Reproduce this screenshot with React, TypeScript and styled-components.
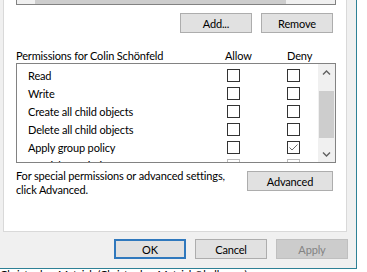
import React from 'react';
import styled, { createGlobalStyle } from 'styled-components';

const GlobalStyle = createGlobalStyle`
  html, body {
    margin: 0;
    padding: 0;
    background: #ffffff;
    overflow: hidden;
  }
  body {
    font-family: Lato, "Liberation Sans", sans-serif;
    font-size: 11px;
    letter-spacing: -0.15px;
    color: #000000;
  }
`;

const Window = styled.div`
  width: 357px;
  height: 269px;
  box-sizing: border-box;
  background: #f0f0f0;
  border-right: 1px solid #2e8196;
  border-bottom: 1px solid #2e8196;
  display: flex;
  flex-direction: column;
`;

const TabPage = styled.div`
  margin-left: 3px;
  width: 344px;
  height: 232px;
  box-sizing: border-box;
  background: #ffffff;
  border: 1px solid #d9d9d9;
  border-top: none;
  padding-left: 12px;
  display: flex;
  flex-direction: column;
`;

const UserList = styled.div`
  width: 320px;
  height: 5px;
  box-sizing: border-box;
  border: 1px solid #828282;
  border-top: none;
  background: #f0f0f0;
  padding-left: 18px;
`;

const HThumb = styled.div`
  width: 251px;
  height: 4px;
  background: #cdcdcd;
`;

const ButtonRow = styled.div`
  width: 317px;
  margin-top: 8px;
  display: flex;
  justify-content: flex-end;
  gap: 9px;
`;

const Button = styled.button<{ $w?: number; $default?: boolean }>`
  width: ${({ $w }) => $w ?? 72}px;
  height: 20px;
  box-sizing: border-box;
  padding: 0;
  font-family: inherit;
  font-size: 11px;
  letter-spacing: -0.15px;
  color: #000000;
  background: #e1e1e1;
  border: ${({ $default }) => ($default ? '2px solid #2f78bd' : '1px solid #adadad')};
  &:disabled {
    background: #cccccc;
    border-color: #bfbfbf;
    color: #838383;
  }
`;

const Header = styled.div`
  width: 320px;
  margin-top: 15px;
  height: 15px;
  display: flex;
  align-items: center;
`;

const HeaderCell = styled.span<{ $w?: number }>`
  width: ${({ $w }) => ($w ? `${$w}px` : 'auto')};
  white-space: nowrap;
`;

const PermList = styled.div`
  width: 320px;
  height: 100px;
  box-sizing: border-box;
  border: 1px solid #828282;
  display: flex;
`;

const Rows = styled.div`
  flex: 1;
  padding-top: 2px;
  overflow: hidden;
`;

const Row = styled.div`
  height: 18px;
  display: grid;
  grid-template-columns: 210px 60px 13px;
  align-items: center;
`;

const RowName = styled.span`
  padding-left: 11px;
  white-space: nowrap;
`;

const Box = styled.span<{ $faded?: boolean }>`
  width: 13px;
  height: 13px;
  box-sizing: border-box;
  border: 1px solid ${({ $faded }) => ($faded ? '#bcbcbc' : '#333333')};
  background: #ffffff;
  display: flex;
  align-items: center;
  justify-content: center;
`;

const ScrollBar = styled.div`
  width: 17px;
  background: #f0f0f0;
  display: flex;
  flex-direction: column;
`;

const Arrow = styled.div`
  height: 17px;
  display: flex;
  align-items: center;
  justify-content: center;
`;

const Track = styled.div`
  flex: 1;
  padding-top: 10px;
`;

const VThumb = styled.div`
  height: 47px;
  margin: 0 1px;
  background: #cdcdcd;
`;

const AdvancedRow = styled.div`
  width: 317px;
  margin-top: 6px;
  display: flex;
  justify-content: space-between;
  align-items: flex-start;
`;

const Note = styled.p`
  margin: 0;
  line-height: 14px;
`;

const AdvancedButton = styled(Button)`
  margin-top: 2px;
`;

const Footer = styled.div`
  margin-top: 7px;
  padding-right: 8px;
  display: flex;
  justify-content: flex-end;
  gap: 9px;
`;

const StatusLine = styled.div`
  height: 3px;
  line-height: 12px;
  white-space: nowrap;
  overflow: visible;
`;

const Check = ({ checked, faded }: { checked?: boolean; faded?: boolean }) => (
  <Box $faded={faded}>
    {checked && (
      <svg width="11" height="11" viewBox="0 0 11 11">
        <path d="M1.5 5.5 L4 8 L9.5 2.5" fill="none" stroke="#6d6d6d" strokeWidth="1" />
      </svg>
    )}
  </Box>
);

const Chevron = ({ down }: { down?: boolean }) => (
  <svg width="9" height="6" viewBox="0 0 9 6">
    <path
      d={down ? 'M1 1.5 L4.5 5 L8 1.5' : 'M1 4.5 L4.5 1 L8 4.5'}
      fill="none"
      stroke="#606060"
      strokeWidth="1.4"
    />
  </svg>
);

const permissions = [
  { name: 'Read', allow: false, deny: false },
  { name: 'Write', allow: false, deny: false },
  { name: 'Create all child objects', allow: false, deny: false },
  { name: 'Delete all child objects', allow: false, deny: false },
  { name: 'Apply group policy', allow: false, deny: true },
  { name: 'Special permissions', allow: false, deny: false, faded: true },
];

const App: React.FC = () => (
  <>
    <GlobalStyle />
    <Window>
      <TabPage>
        <UserList>
          <HThumb />
        </UserList>
        <ButtonRow>
          <Button>Add...</Button>
          <Button>Remove</Button>
        </ButtonRow>
        <Header>
          <HeaderCell $w={209}>Permissions for Colin Schönfeld</HeaderCell>
          <HeaderCell $w={62}>Allow</HeaderCell>
          <HeaderCell>Deny</HeaderCell>
        </Header>
        <PermList>
          <Rows>
            {permissions.map(p => (
              <Row key={p.name}>
                <RowName>{p.name}</RowName>
                <Check checked={p.allow} faded={p.faded} />
                <Check checked={p.deny} faded={p.faded} />
              </Row>
            ))}
          </Rows>
          <ScrollBar>
            <Arrow><Chevron /></Arrow>
            <Track><VThumb /></Track>
            <Arrow><Chevron down /></Arrow>
          </ScrollBar>
        </PermList>
        <AdvancedRow>
          <Note>
            For special permissions or advanced settings,
            <br />
            click Advanced.
          </Note>
          <AdvancedButton $w={86}>Advanced</AdvancedButton>
        </AdvancedRow>
      </TabPage>
      <Footer>
        <Button $default>OK</Button>
        <Button>Cancel</Button>
        <Button disabled>Apply</Button>
      </Footer>
    </Window>
    <StatusLine>Christopher Matzick (Christopher.Matzick@kylk.com)</StatusLine>
  </>
);

export default App;
